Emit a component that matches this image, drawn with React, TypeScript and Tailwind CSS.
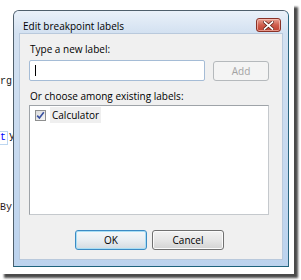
import React from "react";

const ui = { fontFamily: '"Open Sans", "Liberation Sans", sans-serif' };
const mono = { fontFamily: '"Liberation Mono", "DejaVu Sans Mono", monospace' };

function CloseButton() {
  return (
    <div className="w-[25px] h-[14px] rounded-[3px] border border-[#8a3227] bg-gradient-to-b from-[#e8a294] via-[#cf5e4e] to-[#c0402f] flex items-center justify-center shadow-[inset_0_0_0_1px_rgba(255,210,200,0.6)]">
      <svg width="11" height="9" viewBox="0 0 11 9">
        <path d="M1.5 1 L9.5 8 M9.5 1 L1.5 8" stroke="#5a1c14" strokeWidth="3.2" strokeLinecap="square" />
        <path d="M1.5 1 L9.5 8 M9.5 1 L1.5 8" stroke="#ffffff" strokeWidth="1.7" strokeLinecap="square" />
      </svg>
    </div>
  );
}

function Dialog() {
  return (
    <div
      className="absolute left-[13px] top-[10px] w-[276px] h-[257px] flex flex-col rounded-t-[6px] border border-[#4f5f6c] border-r-[#2a6680] border-b-[#1f637d] bg-[#c3d8f0]"
      style={ui}
    >
      {/* title bar */}
      <div className="h-[22px] shrink-0 flex items-center justify-between pl-[9px] pr-[7px] rounded-t-[5px] bg-gradient-to-b from-[#eaf1f9] to-[#d3e1f1]">
        <span className="text-[10px] text-black leading-none mt-[8px]">Edit breakpoint labels</span>
        <div className="mt-[6px]">
          <CloseButton />
        </div>
      </div>
      {/* side frame + client */}
      <div className="flex-1 flex flex-col px-[5px] pb-[6px] bg-gradient-to-b from-[#d3e1f1] to-[#bcd3ee]">
        <div className="flex-1 bg-[#f0f0f0] border border-[#b9c9dc] flex flex-col pl-[9px] pr-[13px] pt-[8px] text-[10px] text-black">
          <div className="h-[14px] leading-[14px] pl-[1px]">Type a new label:</div>
          <div className="mt-[4px] flex items-start gap-[8px]">
            <div className="w-[176px] h-[21px] bg-white border border-[#a5bcd6] rounded-[2px] relative">
              <div className="absolute left-[5px] top-[4px] w-px h-[11px] bg-black" />
            </div>
            <div className="mt-[1px] w-[56px] h-[20px] rounded-[3px] border border-[#b5b9bc] bg-[#f4f4f4] flex items-center justify-center text-[#a3a3a3]">
              Add
            </div>
          </div>
          <div className="mt-[8px] h-[14px] leading-[14px] pl-[1px]">Or choose among existing labels:</div>
          <div className="mt-[2px] w-[240px] h-[110px] bg-white border border-[#9ea3a8] border-r-[#c5c9cd] border-b-[#c5c9cd] pl-[5px] pt-[1px]">
            <div className="flex items-center h-[16px]">
              <div className="w-[11px] h-[11px] border border-[#8e8f8f] bg-gradient-to-br from-[#dcdcdc] to-[#f6f6f6] flex items-center justify-center">
                <svg width="9" height="9" viewBox="0 0 9 9">
                  <path d="M1.2 4.6 L3.4 7 L7.8 1.3" fill="none" stroke="#3850a0" strokeWidth="1.6" />
                </svg>
              </div>
              <div className="ml-[4px] h-[16px] px-[2px] bg-[#efefef] flex items-center">Calculator</div>
            </div>
          </div>
          <div className="mt-[15px] flex gap-[5px] pl-[46px]">
            <div className="w-[72px] h-[20px] rounded-[3px] border border-[#3c8bc4] shadow-[inset_0_0_0_1px_#a8def5] bg-gradient-to-b from-[#f5f8fa] via-[#e9eef2] to-[#d4dbe1] flex items-center justify-center">
              OK
            </div>
            <div className="w-[72px] h-[20px] rounded-[3px] border border-[#707070] shadow-[inset_0_0_0_1px_#fbfbfb] bg-gradient-to-b from-[#f2f2f2] via-[#e6e6e6] to-[#d3d3d3] flex items-center justify-center">
              Cancel
            </div>
          </div>
        </div>
      </div>
    </div>
  );
}

export default function App() {
  return (
    <div className="w-[301px] h-[280px] bg-white relative overflow-hidden">
      {/* drop shadow of the screenshot */}
      <div className="absolute left-[4px] top-[7px] w-[294px] h-[271px] bg-[#4a4a4a] blur-[1px]" />
      {/* screenshot area: code editor behind the dialog */}
      <div className="absolute left-0 top-0 w-[294px] h-[274px] bg-white overflow-hidden">
        <div className="flex flex-col items-start text-[10px] leading-[12px]" style={mono}>
          <div className="mt-[76px] text-[#1a1a1a]">rg</div>
          <div className="mt-[43px] flex">
            <span className="text-[#0000ff] border border-l-0 border-[#bcd6f0] pr-[1px]">t</span>
            <span className="text-black ml-[1px]">y</span>
          </div>
          <div className="mt-[57px] text-[#2b1a1a]">By</div>
        </div>
        <Dialog />
      </div>
    </div>
  );
}
